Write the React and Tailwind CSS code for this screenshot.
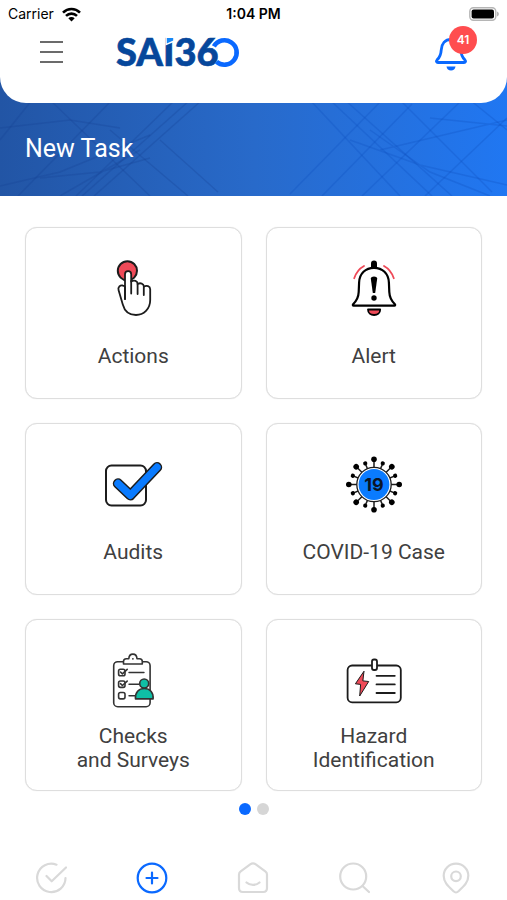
import { useState } from 'react'

const INK = '#1c1c1c'
const RED = '#ef4a58'
const BLUE = '#0a7bff'

function ActionsIcon() {
  return (
    <svg className="size-[60px]" viewBox="0 0 60 60" fill="none" stroke={INK} strokeWidth="1.8" strokeLinecap="round" strokeLinejoin="round" aria-hidden="true">
      <circle cx="24.4" cy="12.8" r="9.6" fill={RED} strokeWidth="2" />
      <path
        d="M22 41V16.2a3.1 3.1 0 0 1 6.2 0V23.5c3-2 6.4-.6 6.4 2.3v.2c2.8-1.7 6.2-.3 6.2 2.4v.2c2.8-1.6 6.4-.4 6.4 2.6V42c0 9-6.500 15-14.200 15-7 0-11.500-4-13.200-10.500l-4.200-14.200c-1-3.300 1.800-5.300 4-4.800l2.400.8z"
        fill="#fff"
      />
      <path d="M22 29v12M28.2 23v12.5M34.6 26v10M40.8 29v8" />
    </svg>
  )
}

function AlertIcon() {
  return (
    <svg className="size-[60px]" viewBox="0 0 60 60" fill="none" stroke="#000" strokeWidth="2.2" strokeLinecap="round" strokeLinejoin="round" aria-hidden="true">
      <path d="M20 8c-4.6 2.5-8 7-9.8 12.2M40 8c4.600 2.500 8 7 9.800 12.200" stroke={RED} strokeWidth="1.8" />
      <path d="M30 5.5v3" strokeWidth="6" />
      <path
        d="M9.6 47.7h40.8c.8 0 1-.9.5-1.5C47 42.500 45.500 39 45.300 34l-.4-9.500C44.500 15.500 38.500 9.800 30 9.800S15.500 15.500 15.100 24.500L14.700 34c-.2 5-1.700 8.500-5.600 12.200-.5.600-.3 1.500.5 1.500z"
        fill="#fff"
      />
      <path d="M26.8 20.5c0-2.8 6.4-2.8 6.4 0L31.2 35h-2.4z" fill="#000" stroke="none" />
      <circle cx="30" cy="40" r="2.7" fill="#000" stroke="none" />
      <path d="M24 51.5h12.2c0 3.5-2.7 5.5-6.1 5.5S24 55 24 51.5z" fill={RED} strokeWidth="1.8" />
    </svg>
  )
}

function AuditsIcon() {
  return (
    <svg className="size-[60px]" viewBox="0 0 60 60" fill="none" strokeLinecap="round" strokeLinejoin="round" aria-hidden="true">
      <rect x="3" y="11.5" width="40" height="40" rx="5.5" stroke={INK} strokeWidth="2" />
      <path d="M15 29.5l12.4 11.8L54 13.2" stroke={INK} strokeWidth="10.4" />
      <path d="M15 29.5l12.4 11.8L54 13.2" stroke={BLUE} strokeWidth="7.4" />
    </svg>
  )
}

const SPIKES = Array.from({ length: 16 }, (_, i) => i)

function CovidIcon() {
  return (
    <svg className="size-[60px]" viewBox="0 0 60 60" aria-hidden="true">
      {SPIKES.map((i) => {
        const long = i % 2 === 0
        return (
          <g key={i} transform={`rotate(${i * 22.5} 30 30.5)`}>
            <path d={long ? 'M30 14V5.5' : 'M30 14V8.5'} stroke={INK} strokeWidth="1.5" />
            <circle cx="30" cy={long ? 5.3 : 7.6} r={long ? 2.8 : 2.1} fill="#000" />
          </g>
        )
      })}
      <circle cx="30" cy="30.5" r="17.2" fill="#fff" stroke={INK} strokeWidth="1.3" />
      <circle cx="30" cy="30.5" r="15.4" fill={BLUE} />
      <text x="30" y="37" textAnchor="middle" className="font-['Inter',sans-serif] text-[18px] font-bold" fill="#0b1526">
        19
      </text>
    </svg>
  )
}

function ChecksIcon() {
  return (
    <svg className="size-[60px]" viewBox="0 0 60 60" fill="none" stroke="#333" strokeWidth="1.6" strokeLinecap="round" strokeLinejoin="round" aria-hidden="true">
      <rect x="10.7" y="11.7" width="36.4" height="45" rx="4" />
      <path d="M20.5 14v-2.500c0-1.800 1.200-2.700 2.800-2.700h2.500c.4-6.200 7.800-6.200 8.200 0h2.500c1.600 0 2.800.9 2.800 2.700V14z" fill="#fff" />
      <circle cx="29.9" cy="8.8" r=".9" fill="#333" stroke="none" />
      {[22.5, 34.2, 45.7].map((y) => (
        <rect key={y} x="15.6" y={y - 3.2} width="6.4" height="6.4" rx="1.8" />
      ))}
      <path d="M17.5 22l1.9 1.8 4.8-4.4M17.5 33.7l1.9 1.8 4.8-4.4" />
      <path d="M26 22.5h15M26 34.2h10M26 45.7h6" strokeWidth="1.4" />
      <circle cx="41.2" cy="33.5" r="4.5" fill="#0fbfa5" />
      <path d="M32.5 48.9c-.5-6.5 3.2-10.4 8.8-10.4s9.3 3.9 8.8 10.4z" fill="#0fbfa5" />
    </svg>
  )
}

function HazardIcon() {
  return (
    <svg className="size-[60px]" viewBox="0 0 60 60" fill="none" stroke={INK} strokeWidth="1.8" strokeLinecap="round" strokeLinejoin="round" aria-hidden="true">
      <rect x="3.6" y="15.5" width="53.2" height="36.8" rx="4.5" />
      <rect x="28" y="9.5" width="5" height="10.5" rx="2" fill="#fff" />
      <path d="M32.5 25.8h18.3M32.5 34.4h18.3M32.5 43h18.3" />
      <path d="M19.8 21.5l-8.4 12.3 5.2.6-.9 11.6 9-14.5-5.5-.6z" fill={RED} strokeWidth="1" />
    </svg>
  )
}

const TASKS = [
  { id: 'actions', lines: ['Actions'], Icon: ActionsIcon },
  { id: 'alert', lines: ['Alert'], Icon: AlertIcon },
  { id: 'audits', lines: ['Audits'], Icon: AuditsIcon },
  { id: 'covid', lines: ['COVID-19 Case'], Icon: CovidIcon },
  { id: 'checks', lines: ['Checks', 'and Surveys'], Icon: ChecksIcon },
  { id: 'hazard', lines: ['Hazard', 'Identification'], Icon: HazardIcon },
]

const TABS = [
  {
    id: 'tasks',
    label: 'Tasks',
    drawing: (
      <>
        <path d="M21.5 2.7A14.2 14.2 0 1 0 30.5 16" />
        <path d="M11.5 14l5.2 5.3L31 5.5" />
      </>
    ),
  },
  {
    id: 'new',
    label: 'New task',
    drawing: (
      <>
        <circle cx="16" cy="16" r="14.3" />
        <path d="M16 10.5v11M10.5 16h11" />
      </>
    ),
  },
  {
    id: 'home',
    label: 'Home',
    drawing: (
      <>
        <path d="M2 12.5c0-1.5.6-2.4 1.7-3.2l9.5-7c1.9-1.3 3.7-1.3 5.6 0l9.5 7c1.1.8 1.7 1.7 1.7 3.2V26c0 2.5-1.3 4-3.8 4H5.8C3.3 30 2 28.500 2 26z" />
        <path d="M9.5 20.5c3.5 3.2 9.5 3.2 13 0" />
      </>
    ),
  },
  {
    id: 'search',
    label: 'Search',
    drawing: (
      <>
        <circle cx="14.2" cy="14.5" r="13" />
        <path d="M23.5 24l6.5 6" />
      </>
    ),
  },
  {
    id: 'places',
    label: 'Places',
    drawing: (
      <>
        <path d="M16 30.5c-1.2 0-2-.8-3-1.7C7.5 23.7 3.7 20 3.7 13.8 3.7 7 9 1.7 16 1.7S28.3 7 28.3 13.8c0 6.2-3.8 9.9-9.3 15-1 .9-1.8 1.7-3 1.7z" />
        <circle cx="16" cy="14.3" r="4.8" />
      </>
    ),
  },
]

function StatusBar() {
  return (
    <div className="grid grid-cols-3 items-center px-2 pt-1 font-['Inter',sans-serif] text-sm text-black">
      <div className="flex items-center gap-2">
        <span>Carrier</span>
        <svg className="h-[15px] w-[19px]" viewBox="0 0 19 15" fill="none" stroke="#000" strokeWidth="2.6" aria-hidden="true">
          <path d="M1 5.6c4.9-4.8 12.1-4.8 17 0M4 8.9c3.2-3.1 7.8-3.1 11 0" />
          <path d="M9.5 14.5L6.3 11.2c1.9-1.6 4.5-1.6 6.4 0z" fill="#000" stroke="none" />
        </svg>
      </div>
      <span className="text-center font-semibold">1:04 PM</span>
      <svg className="h-[14px] w-[30px] justify-self-end" viewBox="0 0 30 14" aria-hidden="true">
        <rect x=".8" y=".8" width="26" height="12.4" rx="3.6" fill="#fff" stroke="#b5b5b5" strokeWidth="1.4" />
        <rect x="2.6" y="2.6" width="22.4" height="8.8" rx="2" fill="#000" />
        <path d="M28 4.5c2.5 1 2.5 4 0 5z" fill="#b5b5b5" />
      </svg>
    </div>
  )
}

function Logo() {
  return (
    <svg className="h-12 w-[124px]" viewBox="0 0 124 48" role="img" aria-label="SAI360">
      <text x="0" y="38" className="font-['Lato',sans-serif] text-[38px] font-black" fill="#06479b" stroke="#06479b" strokeWidth=".6">
        SAI36
      </text>
      {/* Light notch on top of the I */}
      <path d="M49.500 8h9.500v5.500l-9.500 4z" fill="#fff" />
      <path d="M50.8 10h6.400v2.500l-6.400 2.900z" fill="#1787f5" />
      {/* Ring, open where it meets the 6 */}
      <path d="M97.900 18.400A12.200 12.200 0 1 1 102.400 35.100" fill="none" stroke="#fff" strokeWidth="7" />
      <path d="M97.900 18.400A12.200 12.200 0 1 1 100.500 33.700" fill="none" stroke="#0a69ff" strokeWidth="4.600" />
    </svg>
  )
}

function Header() {
  return (
    <header className="relative rounded-b-[26px] bg-white pb-[31px]">
      <StatusBar />
      <div className="mt-2 flex h-10 items-center px-10">
        <button type="button" aria-label="Menu" className="flex w-[23px] flex-col gap-2">
          <span className="h-0.5 bg-[#6b6b6b]" />
          <span className="h-0.5 bg-[#6b6b6b]" />
          <span className="h-0.5 bg-[#6b6b6b]" />
        </button>
        <div className="ml-[53px]">
          <Logo />
        </div>
        <button type="button" aria-label="Notifications, 41 unread" className="relative ml-auto pt-1.5">
          <svg className="h-[34px] w-8" viewBox="0 0 32 34" fill="none" stroke="#0a69ff" strokeWidth="2.8" strokeLinejoin="round" aria-hidden="true">
            <path d="M3 24.5h26c1.5 0 2-1.3 1-2.4-3.5-3.6-4-5.6-4.2-10C25.5 5.8 22 1.5 16 1.5S6.5 5.8 6.2 12.1c-.2 4.4-.7 6.4-4.2 10-1 1.1-.5 2.4 1 2.4z" />
            <path d="M11.5 28.5h9c-.4 2.4-2 4-4.500 4s-4.100-1.600-4.500-4z" fill="#0a69ff" stroke="none" />
          </svg>
          <span className="absolute -top-1.5 left-[14px] flex size-7 items-center justify-center rounded-full bg-[#ff4d4f] font-['Inter',sans-serif] text-xs font-semibold text-white">
            41
          </span>
        </button>
      </div>
    </header>
  )
}

function BannerLines() {
  return (
    <svg className="absolute inset-0 h-full w-full" viewBox="0 0 507 196" preserveAspectRatio="none" fill="none" aria-hidden="true">
      <g stroke="#173f94" strokeOpacity=".28" strokeWidth="1.5">
        <path d="M18 196L112 100M76 196L175 100M82 196L190 100M94 196L202 100M0 140L32 100" />
        <path d="M50 100L150 196M110 130L188 196M160 140L218 192" />
        <path d="M0 186L60 172L150 135M60 196L140 150M0 128L70 120L120 128M40 178L100 172L150 158" />
      </g>
      <g stroke="#0d4fc0" strokeOpacity=".28" strokeWidth="1.5">
        <path d="M310 100L400 196M330 100L432 196M345 100L452 196M400 100L492 192M470 100L507 130" />
        <path d="M290 194L382 100M322 196L412 104M362 196L462 100M425 196L507 118" />
        <path d="M350 140L420 165L507 185M380 150L507 120M430 118L507 126M370 130L430 172L490 196" />
      </g>
    </svg>
  )
}

function TaskCard({ task }) {
  const { Icon, lines } = task
  return (
    <button
      type="button"
      className="flex flex-col items-center rounded-xl border border-[#dedede] bg-white px-2 pt-[30px] pb-[18px]
                 shadow-[0_0_1px_#dedede]"
    >
      <Icon />
      <span className="mt-[14px] flex min-h-12 flex-col justify-center text-center text-[21px] leading-6 text-[#404040]">
        {lines.map((line) => (
          <span key={line}>{line}</span>
        ))}
      </span>
    </button>
  )
}

function App() {
  const [tab, setTab] = useState('new')
  const [page, setPage] = useState(0)

  return (
    <div className="flex min-h-screen flex-col bg-white font-['Roboto',sans-serif]">
      {/* Header over the blue banner */}
      <div className="relative overflow-hidden bg-linear-to-r from-[#2255a5] via-[#286aca] to-[#2077f2]">
        <BannerLines />
        <Header />
        <h1 className="relative px-[25px] pt-7 pb-[30px] text-[25px] leading-[35px] text-white">New Task</h1>
      </div>

      {/* Task types */}
      <main className="px-[25px] pt-[31px]">
        <div className="grid grid-cols-2 gap-6">
          {TASKS.map((task) => (
            <TaskCard key={task.id} task={task} />
          ))}
        </div>

        <div className="mt-3 flex justify-center gap-1.5">
          {[0, 1].map((n) => (
            <button
              key={n}
              type="button"
              aria-label={`Page ${n + 1}`}
              onClick={() => setPage(n)}
              className={`size-3 rounded-full ${page === n ? 'bg-[#0a69ff]' : 'bg-[#d6d6d6]'}`}
            />
          ))}
        </div>
      </main>

      {/* Bottom tabs */}
      <nav className="mt-auto grid grid-cols-5 pt-6 pb-1.5">
        {TABS.map((t) => (
          <button
            key={t.id}
            type="button"
            aria-label={t.label}
            onClick={() => setTab(t.id)}
            className={`flex justify-center ${tab === t.id ? 'text-[#0a69ff]' : 'text-[#d9d9d9]'}`}
          >
            <svg className="size-8" viewBox="0 0 32 32" fill="none" stroke="currentColor" strokeWidth="2.2" strokeLinecap="round" strokeLinejoin="round">
              {t.drawing}
            </svg>
          </button>
        ))}
      </nav>
    </div>
  )
}

export default App
